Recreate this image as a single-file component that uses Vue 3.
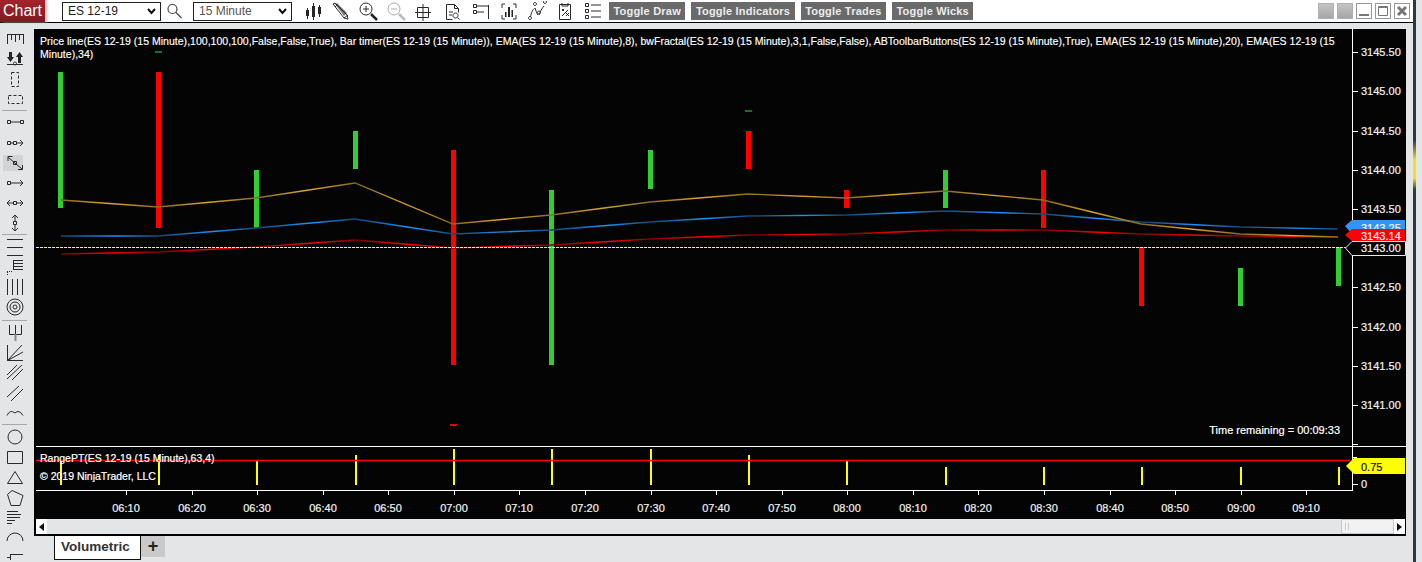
<script setup>
const mainBars = [
  [58, 72, 208, 'g'], [156, 72, 228, 'r'], [254, 170, 228, 'g'], [353, 131, 169, 'g'],
  [451, 150, 365, 'r'], [549, 190, 365, 'g'], [648, 150, 189, 'g'], [746, 131, 169, 'r'],
  [844, 190, 208, 'r'], [943, 170, 208, 'g'], [1041, 170, 228, 'r'], [1139, 247, 306, 'r'],
  [1238, 268, 306, 'g'], [1336, 247, 286, 'g']
].map(([x, top, bottom, c]) => ({ x, top, h: bottom - top, fill: c === 'g' ? '#32cd32' : '#ff0000' }))

const xs = [61, 158, 256, 355, 453, 551, 650, 748, 846, 945, 1043, 1141, 1240, 1338]
const toLine = (ys) => xs.map((x, i) => `${x},${ys[i]}`).join(' ')
const orange = toLine([200, 207, 198, 183, 224, 215, 202, 194, 198, 191, 200, 224, 234, 237])
const blue = toLine([236, 236, 228, 219, 234, 230, 222, 216, 215, 211, 214, 222, 227, 229])
const redLine = toLine([254, 252, 247, 240, 248, 245, 239, 235, 234, 230, 230, 234, 236, 237])

const volume = [461, 455, 461, 455, 449, 449, 449, 455, 461, 467, 467, 467, 467, 467]
  .map((top, i) => ({ x: xs[i] - (i === 0 ? 1 : 0), top, h: 485 - top }))

const priceLabels = [
  ['3145.50', 52], ['3145.00', 91], ['3144.50', 131], ['3144.00', 170], ['3143.50', 209],
  ['3142.50', 287], ['3142.00', 327], ['3141.50', 366], ['3141.00', 405]
]
const timeLabels = [
  ['06:10', 126], ['06:20', 192], ['06:30', 257], ['06:40', 323], ['06:50', 388], ['07:00', 454],
  ['07:10', 519], ['07:20', 585], ['07:30', 651], ['07:40', 716], ['07:50', 782], ['08:00', 847],
  ['08:10', 913], ['08:20', 978], ['08:30', 1044], ['08:40', 1110], ['08:50', 1175], ['09:00', 1241],
  ['09:10', 1306]
]

const topIcons = [
  { d: 'M4.5 7V18M10.5 2V19M16.5 4V16', f: 'M3 9h3v6H3zM9 5h3v11H9zM15 6h3v7h-3z' },
  { d: 'M2 3l2-1 12 12 1 4-4-1zM4 6L6 4M13 17l4-3', f: 'M4 3l2-1 10 10-3 3z', gray: true },
  { d: 'M13 8a6 6 0 1 1-12 0a6 6 0 1 1 12 0M7 5v6M4 8h6', t: 'M12 13l6 6' },
  { d: 'M13 8a6 6 0 1 1-12 0a6 6 0 1 1 12 0M4 8h6', t: 'M12 13l6 6', dim: true },
  { d: 'M2.500 6.500h11v10h-11zM8 3v17M0 11.500h16' },
  { d: 'M3.500 18.500V3.500h8l4 4v4M11.500 3.500v4h4M3.500 18.500h6M6 11h4M6 14h3M12.500 12a2.500 2.500 0 1 1-.01 0M14.500 16.500l2 2' },
  { d: 'M2.500 3.500h3v3h-3zM2.500 9.500h3v3h-3zM6 5h11M6 11h7M17.500 4v14' },
  { d: 'M3 7V3h3M14 3h3v4M3 14v4h3M17 14v4h-3', f: 'M6 11h1.500v5H6zM9 6h2v10H9zM12.500 9H14v7h-1.500z' },
  { d: 'M3 18.500a1.500 1.500 0 1 1 .01 0M3.500 16C4 12 6 8 7.500 7.500M8 7c1 3 2 6 3 7M12 14c1-3 3-7 5-9M8 4.500a1.500 1.500 0 1 1 .01 0M12 13a1.500 1.500 0 1 1 .01 0M18 2.500a1.500 1.500 0 1 1 .01 0' },
  { d: 'M4.500 3.500h11v15h-11zM7 2v3h6V2M7 8l2 2M9 8l-2 2M11 12l3 3M14 12l-3 3M7 15l6-6' },
  { d: 'M2.500 2.500h3v3h-3zM2.500 8.500h3v3h-3zM2.500 14.500h3v3h-3zM8 4h10M8 10h10M8 16h10' }
]

const toolGroups = [
  [
    { top: 32, h: 18, d: 'M7 34.500H23.500M7.500 34V44M11.500 35V40M15.500 35V42M19.500 35V40M23.500 34V44' },
    { top: 50, h: 19, d: 'M7 64.500H23M10.500 52V59M19.500 56V63M15 65a1.500 1.500 0 1 1 .01 0', f: 'M7 57h7l-3.500 5zM16 57h7l-3.500-5zM9 52h3v6H9zM18 57h3v6h-3z' },
    { top: 69, h: 20, d: 'M11.500 72.500h7v14h-7z', dash: '3 2' },
    { top: 89, h: 20, d: 'M8.500 95.500h14v8h-14z', dash: '3 2' }
  ],
  [
    { top: 114, h: 20, d: 'M7.500 121.500h3v3h-3zM20.500 121.500h3v3h-3zM10.500 123H20.500' },
    { top: 134, h: 20, d: 'M7.500 142.500h3v3h-3zM13.500 142.500h3v3h-3zM10.500 144h3M16.500 144H23M20 141l3 3-3 3' },
    { top: 154, h: 20, on: true, d: 'M8.500 158.500L22 170M8 162v-4.500h4.500M22.500 166v4.500H18M13.500 162.500h3v3h-3z' },
    { top: 174, h: 20, d: 'M7.500 182.500h3v3h-3zM10.500 184H23M20 181l3 3-3 3' },
    { top: 194, h: 20, d: 'M13.500 202.500h3v3h-3zM7 204h6.500M16.500 204H23M10 201l-3 3 3 3M20 201l3 3-3 3' },
    { top: 214, h: 20, d: 'M13.500 222.500h3v3h-3zM15 216v6.500M15 225.500V232M12 219l3-3 3 3M12 229l3 3 3-3' }
  ],
  [
    { top: 239, h: 20, d: 'M7 241.500H23M7 249.500H23M7 257.500H23' },
    { top: 259, h: 20, d: 'M13 262.500H23M13 265.500H23M13 268.500H23M13 271.500H23M13.500 262V272', dots: 'M7 273.500h6M7.500 274v4' },
    { top: 279, h: 20, d: 'M7.500 281V297M12.500 281V297M17.500 281V297M22.500 281V297' },
    { top: 299, h: 22, d: 'M23 309a8 8 0 1 1-16 0a8 8 0 1 1 16 0M20 309a5 5 0 1 1-10 0a5 5 0 1 1 10 0M17 309a2 2 0 1 1-4 0a2 2 0 1 1 4 0' }
  ],
  [
    { top: 325, h: 20, d: 'M9.500 327V336.500H21.500V327M15.500 327V336', t2: 'M15.500 336V343' },
    { top: 345, h: 20, d: 'M7.500 347V362.500H23M7.500 362.500L22 347M7.500 362.500L23 354' },
    { top: 365, h: 20, d: 'M7 377L17 367M7 381L22 367M12 382L23 371' },
    { top: 385, h: 20, d: 'M7 399L19 388M11 403L23 391' },
    { top: 405, h: 20, d: 'M7 417.500Q10 411 15 415Q19 411 23 417.500' }
  ],
  [
    { top: 429, h: 20, d: 'M22 439a7 7 0 1 1-14 0a7 7 0 1 1 14 0' },
    { top: 449, h: 20, d: 'M7.500 453.500h15v12h-15z' },
    { top: 469, h: 20, d: 'M15 473.500L7.500 485.500H22.500Z' },
    { top: 489, h: 20, d: 'M12 492.500L23 497.500L20 507.500H11L7.500 496.500Z' },
    { top: 509, h: 20, d: 'M7 513.500H18M7 516.500H21M7 519.500H20M7 522.500H15M7 525.500H12' },
    { top: 529, h: 20, d: 'M7 543A8 8 0 0 1 23 543' },
    { top: 549, h: 13, d: 'M7 559.500h3M10.500 556v6M10 556.500H23' }
  ]
]
</script>

<template>
  <div class="app">
    <div class="window">
      <header class="topbar">
        <div class="brand">Chart</div>
        <div class="picker first">
          <span>ES 12-19</span>
          <svg width="9" height="7" viewBox="0 0 9 7"><path d="M1 1l3.500 4L8 1" fill="none" stroke="#111" stroke-width="2" /></svg>
        </div>
        <svg class="search" width="16" height="16" viewBox="0 0 16 16">
          <path d="M10 6a4.500 4.500 0 1 1-9 0a4.500 4.500 0 1 1 9 0M9 9.500l5.500 5.500" fill="none" stroke="#444" stroke-width="1.200" />
        </svg>
        <div class="picker second">
          <span>15 Minute</span>
          <svg width="9" height="7" viewBox="0 0 9 7"><path d="M1 1l3.500 4L8 1" fill="none" stroke="#111" stroke-width="2" /></svg>
        </div>
        <div class="icons">
          <svg v-for="(ic, i) in topIcons" :key="i" width="20" height="20" viewBox="0 0 20 20" :class="{ dim: ic.dim }">
            <path v-if="ic.f" :d="ic.f" class="ifill" :class="{ gray: ic.gray }" />
            <path :d="ic.d" class="istroke" />
            <path v-if="ic.t" :d="ic.t" class="ithick" />
          </svg>
        </div>
        <div class="toggles">
          <span class="toggle">Toggle Draw</span>
          <span class="toggle">Toggle Indicators</span>
          <span class="toggle">Toggle Trades</span>
          <span class="toggle">Toggle Wicks</span>
        </div>
        <div class="winbtns">
          <span class="wb solid"></span>
          <span class="wb solid"></span>
          <span class="wb"><svg width="16" height="16" viewBox="0 0 16 16"><path d="M3 12h10" stroke="#777" stroke-width="2" /></svg></span>
          <span class="wb"><svg width="16" height="16" viewBox="0 0 16 16"><path d="M3.500 3.500h9v9h-9zM3 4.500h10" fill="none" stroke="#777" /></svg></span>
          <span class="wb"><svg width="16" height="16" viewBox="0 0 16 16"><path d="M4 4l8 8M12 4l-8 8" stroke="#777" stroke-width="3" /></svg></span>
        </div>
      </header>

      <div class="workspace">
        <aside class="tools">
          <template v-for="(group, g) in toolGroups" :key="g">
            <div v-if="g" class="sep"></div>
            <svg
              v-for="(t, i) in group"
              :key="i"
              width="34"
              :height="t.h"
              :viewBox="`0 ${t.top} 34 ${t.h}`"
              :class="{ active: t.on }"
            >
              <path v-if="t.f" :d="t.f" fill="#222" />
              <path :d="t.d" class="istroke" :stroke-dasharray="t.dash" />
              <path v-if="t.dots" :d="t.dots" class="istroke" stroke-dasharray="1 1" />
              <path v-if="t.t2" :d="t.t2" fill="none" stroke="#888" stroke-width="2" />
            </svg>
          </template>
        </aside>

        <main class="center">
          <section class="panel">
            <div class="plot">
              <svg class="canvas" width="1370" height="490" viewBox="36 29 1370 490">
                <defs>
                  <linearGradient id="gO" gradientUnits="userSpaceOnUse" x1="61" x2="159.300" y1="0" y2="0" spreadMethod="repeat">
                    <stop offset="0" stop-color="#8a6a1e" /><stop offset=".5" stop-color="#dba42c" /><stop offset="1" stop-color="#8a6a1e" />
                  </linearGradient>
                  <linearGradient id="gB" gradientUnits="userSpaceOnUse" x1="61" x2="159.300" y1="0" y2="0" spreadMethod="repeat">
                    <stop offset="0" stop-color="#14476f" /><stop offset=".55" stop-color="#1e90ff" /><stop offset="1" stop-color="#14476f" />
                  </linearGradient>
                  <linearGradient id="gR" gradientUnits="userSpaceOnUse" x1="61" x2="159.300" y1="0" y2="0" spreadMethod="repeat">
                    <stop offset="0" stop-color="#7a0000" /><stop offset=".55" stop-color="#ff0000" /><stop offset="1" stop-color="#7a0000" />
                  </linearGradient>
                </defs>

                <rect v-for="b in mainBars" :key="b.x" :x="b.x" :y="b.top" width="5" :height="b.h" :fill="b.fill" />

                <rect x="155" y="51" width="7" height="2" fill="#0a7a0a" />
                <rect x="745" y="110" width="7" height="2" fill="#0a7a0a" />
                <rect x="450" y="424" width="7" height="2" fill="#d01010" />

                <polyline :points="redLine" fill="none" stroke="url(#gR)" stroke-width="1.400" />
                <polyline :points="blue" fill="none" stroke="url(#gB)" stroke-width="1.400" />
                <polyline :points="orange" fill="none" stroke="url(#gO)" stroke-width="1.300" />

                <line x1="36" x2="1352" y1="247.500" y2="247.500" stroke="#ffef66" stroke-dasharray="3 1" />

                <path d="M1352.500 29V491M36 446.500H1406M36 490.500H1353" stroke="#fff" fill="none" />

                <g v-for="p in priceLabels" :key="p[0]">
                  <line x1="1352" x2="1358" :y1="p[1] + 0.5" :y2="p[1] + 0.5" stroke="#fff" />
                  <text x="1361" :y="p[1] + 4" class="axis">{{ p[0] }}</text>
                </g>
                <path d="M1352 444.500h6M1352 457.500h5M1352 484.500h6" stroke="#fff" />

                <g v-for="t in timeLabels" :key="t[0]">
                  <line :x1="t[1] + 0.5" :x2="t[1] + 0.5" y1="491" y2="495" stroke="#fff" />
                  <text :x="t[1]" y="512" text-anchor="middle" class="axis">{{ t[0] }}</text>
                </g>

                <polygon points="1345,226 1352,220 1405,220 1405,234 1352,234" fill="#2f96f4" />
                <text x="1361" y="232" class="axis">3143.25</text>
                <polygon points="1345,235 1352,229 1405,229 1405,241 1352,241" fill="#ff0000" />
                <text x="1361" y="240" class="axis">3143.14</text>
                <polygon points="1345.500,248 1352,241.500 1405.500,241.500 1405.500,255.500 1352,255.500" fill="#040404" stroke="#e8e8e8" />
                <text x="1361" y="252" class="axis">3143.00</text>

                <rect v-for="v in volume" :key="v.x" :x="v.x" :y="v.top" width="2" :height="v.h" fill="#ffff00" />
                <line x1="36" x2="1350" y1="460.500" y2="460.500" stroke="#ff0000" stroke-width="1.500" />
                <polygon points="1346,466 1354,458 1405,458 1405,474 1354,474" fill="#ffff00" />
                <text x="1361" y="471" class="axis ink">0.75</text>
                <text x="1361" y="488" class="axis">0</text>

                <text x="40" y="462" class="note small">RangePT(ES 12-19 (15 Minute),63,4)</text>
                <text x="40" y="480" class="note small">© 2019 NinjaTrader, LLC</text>
                <text x="1340" y="434" text-anchor="end" class="note">Time remaining = 00:09:33</text>
              </svg>
              <p class="legend">Price line(ES 12-19 (15 Minute),100,100,100,False,False,True), Bar timer(ES 12-19 (15 Minute)), EMA(ES 12-19 (15 Minute),8), bwFractal(ES 12-19 (15 Minute),3,1,False,False), ABToolbarButtons(ES 12-19 (15 Minute),True), EMA(ES 12-19 (15 Minute),20), EMA(ES 12-19 (15 Minute),34)</p>
            </div>
            <div class="scroll">
              <span class="arrow"><svg width="5" height="8" viewBox="0 0 5 8"><path d="M5 0v8L0 4z" fill="#111" /></svg></span>
              <span class="thumb"><i></i><i></i></span>
              <span class="arrow"><svg width="5" height="8" viewBox="0 0 5 8"><path d="M0 0v8l5-4z" fill="#111" /></svg></span>
            </div>
          </section>
          <nav class="tabs">
            <span class="tab">Volumetric</span>
            <span class="plus">+</span>
          </nav>
        </main>
      </div>
    </div>
    <div class="edge"></div>
  </div>
</template>

<style>
html, body { margin: 0; overflow: hidden; background: #e4e5e7; }
</style>

<style scoped>
.app {
  width: 1422px;
  height: 562px;
  display: flex;
  overflow: hidden;
  background: #e4e5e7;
  font-family: "Liberation Sans", Arial, sans-serif;
}
.window { width: 1413px; display: flex; flex-direction: column; }
.edge {
  width: 3px;
  background: linear-gradient(to bottom, #2c3843 0, #2c3843 140px, #f2e21a 160px, #f2e21a 178px, #2c3843 190px);
}

.topbar {
  height: 22px;
  flex: none;
  display: flex;
  align-items: center;
  background: #fff;
  border-bottom: 1px solid #000;
}
.brand {
  width: 45px;
  height: 22px;
  flex: none;
  background: linear-gradient(#a5242c, #7f1a20);
  color: #fff;
  font-size: 16px;
  line-height: 22px;
  text-align: center;
  box-shadow: 2px 0 3px #bbb;
}
.picker {
  height: 19px;
  box-sizing: border-box;
  border: 1.500px solid #222;
  display: flex;
  align-items: center;
  justify-content: space-between;
  padding: 0 4px 0 5px;
  font-size: 12px;
  color: #222;
}
.picker.first { width: 99px; margin-left: 17px; }
.picker.second { width: 99px; margin-left: 10px; color: #555; }
.search { margin-left: 6px; flex: none; }
.icons { display: flex; gap: 8px; margin-left: 11px; flex: none; }
.istroke { fill: none; stroke: #2a2a2a; stroke-width: 1; }
.ifill { fill: #222; }
.ifill.gray { fill: #777; }
.ithick { fill: none; stroke: #222; stroke-width: 2.500; }
.dim .istroke { stroke: #aaa; }
.dim .ithick { stroke: #bbb; }

.toggles { display: flex; gap: 6px; margin-left: 6px; }
.toggle {
  height: 18px;
  padding: 0 4.500px;
  background: #6a6a6a;
  color: #ececec;
  font-size: 11px;
  font-weight: 700;
  line-height: 18px;
  letter-spacing: .2px;
}
.winbtns { display: flex; gap: 3px; margin-left: auto; margin-right: 3px; }
.wb {
  width: 16px;
  height: 16px;
  box-sizing: border-box;
  border: 1px solid #999;
  display: block;
}
.wb svg { display: block; margin: -1px; }
.wb.solid { background: linear-gradient(#c4c4c4, #a6a6a6); border-color: #b0b0b0; }

.workspace { flex: 1; display: flex; min-height: 0; }
.tools { width: 34px; flex: none; display: flex; flex-direction: column; padding-top: 9px; overflow: hidden; }
.tools svg { display: block; flex: none; }
.tools svg.active { background: linear-gradient(#d2d3d5, #d2d3d5) 3px 2px / 20px 16px no-repeat; }
.sep { height: 1px; margin: 1px 7px 2px 2px; background: #a8a8a8; flex: none; }

.center { flex: 1; padding-top: 6px; min-width: 0; }
.panel {
  width: 1372px;
  height: 507px;
  box-sizing: border-box;
  background: #040404;
  border: solid #000;
  border-width: 0 1px 1px 2px;
}
.plot { position: relative; height: 490px; }
.canvas { display: block; }
.legend {
  position: absolute;
  left: 4px;
  top: 6px;
  width: 1306px;
  margin: 0;
  color: #fff;
  font-size: 10.560px;
  line-height: 13px;
  -webkit-text-stroke: .15px #fff;
}
.axis { fill: #f2f2f2; font-size: 11px; stroke: #f2f2f2; stroke-width: .2px; }
.axis.ink { fill: #111; stroke: #111; }
.note { fill: #fff; font-size: 11px; stroke: #fff; stroke-width: .2px; }
.note.small { font-size: 10.500px; }

.scroll {
  height: 15px;
  display: flex;
  align-items: stretch;
  background: #e4e5e7;
}
.arrow {
  width: 11px;
  background: #fff;
  display: flex;
  align-items: center;
  justify-content: center;
}
.thumb {
  width: 53px;
  margin-left: auto;
  box-sizing: border-box;
  border: 1px solid #c8c8c8;
  background: #f2f2f2;
  display: flex;
  gap: 2px;
  padding: 3px 0 3px 3px;
}
.thumb i { width: 1px; background: #ccc; }

.tabs { display: flex; margin-left: 20px; }
.tab {
  width: 87px;
  height: 24px;
  box-sizing: border-box;
  background: #fff;
  border: 1px solid #111;
  border-top: 0;
  padding-left: 6px;
  font-size: 13.500px;
  font-weight: 700;
  color: #333;
  line-height: 22px;
}
.plus {
  width: 24px;
  height: 21px;
  background: #c9c9c9;
  color: #222;
  font-size: 18px;
  font-weight: 700;
  line-height: 20px;
  text-align: center;
}
</style>
